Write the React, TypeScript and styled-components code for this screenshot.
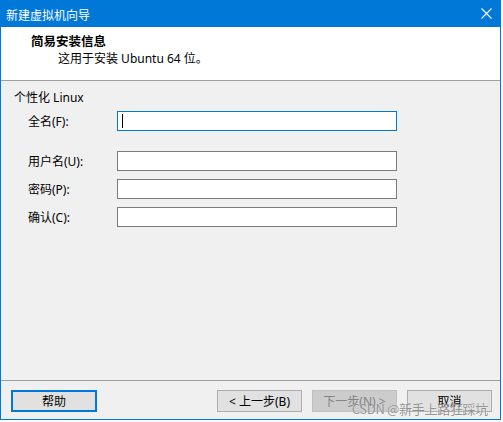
import * as React from "react";
import styled, { createGlobalStyle } from "styled-components";

const GlobalStyle = createGlobalStyle`
  html, body {
    margin: 0;
    padding: 0;
    background: #ffffff;
  }
  body {
    font-family: "Noto Sans", "Noto Sans CJK SC", sans-serif;
    font-size: 12px;
    color: #000000;
  }
`;

const Window = styled.div`
  position: relative;
  width: 501px;
  height: 420px;
  box-sizing: border-box;
  border: 1px solid #0078d7;
  display: flex;
  flex-direction: column;
  background: #f0f0f0;
`;

const TitleBar = styled.div`
  height: 26px;
  background: #0078d7;
  color: #ffffff;
  display: flex;
  align-items: center;
  justify-content: space-between;
  padding: 0 8px 0 5px;
  font-family: "Noto Sans CJK SC", sans-serif;
  font-size: 12px;
`;

const CloseButton = styled.div`
  width: 12px;
  height: 12px;
  display: flex;
  align-items: center;
  justify-content: center;
  margin-top: -1px;
`;

const Header = styled.div`
  height: 54px;
  background: #ffffff;
  border-bottom: 1px solid #a0a0a0;
  display: flex;
  flex-direction: column;
  padding: 5px 0 0 30px;
  box-sizing: border-box;
`;

const HeaderTitle = styled.div`
  font-family: "Noto Sans CJK SC", sans-serif;
  font-weight: bold;
  font-size: 12.5px;
  line-height: 17px;
`;

const HeaderSub = styled.div`
  padding-left: 27px;
  line-height: 18px;
  margin-top: 1px;
`;

const Body = styled.div`
  flex: 1;
  padding: 8px 0 0 13px;
  display: flex;
  flex-direction: column;
`;

const GroupLabel = styled.div`
  line-height: 18px;
`;

const Form = styled.div`
  display: grid;
  grid-template-columns: 89px 280px;
  grid-auto-rows: auto;
  row-gap: 8px;
  padding-left: 14px;
  margin-top: 4px;
`;

const Label = styled.div<{ $gap?: boolean }>`
  height: 20px;
  display: flex;
  align-items: center;
  margin-top: ${(p) => (p.$gap ? "12px" : "0")};
`;

const TextBox = styled.div<{ $focused?: boolean; $gap?: boolean }>`
  height: 20px;
  box-sizing: border-box;
  background: #ffffff;
  border: 1px solid ${(p) => (p.$focused ? "#0078d7" : "#7a7a7a")};
  display: flex;
  align-items: center;
  padding-left: 4px;
  margin-top: ${(p) => (p.$gap ? "12px" : "0")};
`;

const Caret = styled.span`
  width: 1px;
  height: 14px;
  background: #000000;
`;

const Footer = styled.div`
  height: 39px;
  border-top: 1px solid #a0a0a0;
  display: flex;
  align-items: flex-start;
  padding: 9px 8px 0 10px;
  box-sizing: border-box;
`;

const Spacer = styled.div`
  flex: 1;
`;

const Button = styled.div<{ $default?: boolean; $disabled?: boolean }>`
  width: ${(p) => (p.$default ? "86px" : "85px")};
  height: 22px;
  box-sizing: border-box;
  display: flex;
  align-items: center;
  justify-content: center;
  background: ${(p) => (p.$disabled ? "#cccccc" : "#e1e1e1")};
  color: ${(p) => (p.$disabled ? "#838383" : "#000000")};
  border: ${(p) =>
    p.$default ? "2px solid #0078d7" : p.$disabled ? "1px solid #bfbfbf" : "1px solid #adadad"};
  margin-left: ${(p) => (p.$default ? "0" : "10px")};
`;

const Watermark = styled.div`
  position: absolute;
  right: 12px;
  bottom: 1px;
  font-family: "Noto Sans CJK SC", sans-serif;
  font-size: 13px;
  letter-spacing: -0.3px;
  color: rgba(100, 100, 100, 0.7);
  text-shadow: 0 0 1px rgba(255, 255, 255, 0.9);
  pointer-events: none;
  white-space: nowrap;
`;

type Field = {
  label: string;
  focused?: boolean;
  gap?: boolean;
};

const fields: Array<Field> = [
  { label: "全名(F):", focused: true },
  { label: "用户名(U):", gap: true },
  { label: "密码(P):" },
  { label: "确认(C):" },
];

export default function App() {
  return (
    <>
      <GlobalStyle />
      <Window>
        <TitleBar>
          <span>新建虚拟机向导</span>
          <CloseButton>
            <svg width="11" height="11" viewBox="0 0 11 11">
              <path d="M0.5 0.5 L10.5 10.5 M10.5 0.5 L0.5 10.5" stroke="#ffffff" strokeWidth="1.1" />
            </svg>
          </CloseButton>
        </TitleBar>

        <Header>
          <HeaderTitle>简易安装信息</HeaderTitle>
          <HeaderSub>这用于安装 Ubuntu 64 位。</HeaderSub>
        </Header>

        <Body>
          <GroupLabel>个性化 Linux</GroupLabel>
          <Form>
            {fields.map((f) => (
              <React.Fragment key={f.label}>
                <Label $gap={f.gap}>{f.label}</Label>
                <TextBox $focused={f.focused} $gap={f.gap}>
                  {f.focused && <Caret />}
                </TextBox>
              </React.Fragment>
            ))}
          </Form>
        </Body>

        <Footer>
          <Button $default>帮助</Button>
          <Spacer />
          <Button>&lt; 上一步(B)</Button>
          <Button $disabled>下一步(N) &gt;</Button>
          <Button>取消</Button>
        </Footer>

        <Watermark>CSDN @新手上路狂踩坑</Watermark>
      </Window>
    </>
  );
}
